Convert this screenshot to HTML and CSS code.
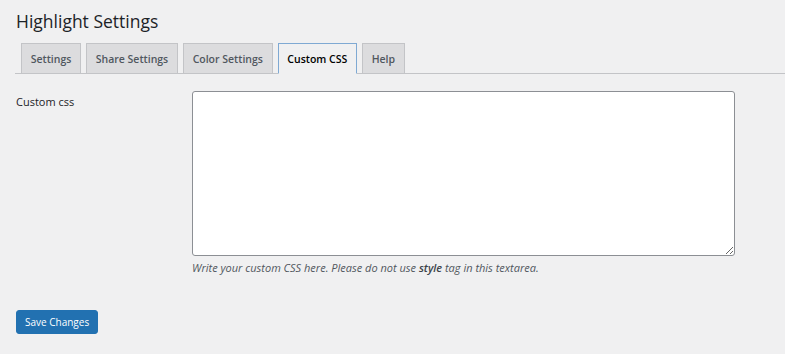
FILE: index.html
```html
<!DOCTYPE html>
<html lang="en">
<head>
    <meta charset="UTF-8">
    <meta name="viewport" content="width=device-width, initial-scale=1.0">
    <title>Highlight Settings</title>
    <link rel="stylesheet" href="styles.css">
</head>
<body>
    <div class="wrap">
        <h1>Highlight Settings</h1>

        <nav class="nav-tab-wrapper">
            <a href="#" class="nav-tab">Settings</a>
            <a href="#" class="nav-tab">Share Settings</a>
            <a href="#" class="nav-tab">Color Settings</a>
            <a href="#" class="nav-tab nav-tab-active">Custom CSS</a>
            <a href="#" class="nav-tab">Help</a>
        </nav>

        <form class="settings-form">
            <div class="form-row">
                <label for="custom_css" class="row-label">Custom css</label>
                <div class="row-field">
                    <textarea id="custom_css" name="custom_css"></textarea>
                    <p class="description">Write your custom CSS here. Please do not use <strong>style</strong> tag in this textarea.</p>
                </div>
            </div>

            <p class="submit">
                <button type="submit" class="button-primary">Save Changes</button>
            </p>
        </form>
    </div>
</body>
</html>
```

FILE: styles.css
```css
body {
    margin: 0;
    background: #f0f0f1;
    color: #1d2327;
    font-family: "Open Sans", "Noto Sans", sans-serif;
}
.wrap {
    padding: 9px 0 0 15px;
}
h1 {
    margin: 0 0 0 1px;
    font-size: 17.5px;
    font-weight: 400;
    line-height: 24px;
    color: #1d2327;
}
.nav-tab-wrapper {
    display: flex;
    margin-top: 10px;
    padding-left: 6px;
    border-bottom: 1px solid #c3c4c7;
}
.nav-tab {
    display: block;
    margin-right: 5px;
    margin-bottom: -1px;
    padding: 5px 8.7px 4px;
    font-size: 10.5px;
    font-weight: 600;
    line-height: 20px;
    color: #50575e;
    text-decoration: none;
    background: #dcdcde;
    border: 1px solid #c3c4c7;
}
.nav-tab-active {
    color: #000;
    background: #f0f0f1;
    border-color: #7fa9d3;
    border-bottom-color: #f0f0f1;
}
.settings-form {
    margin: 0;
}
.form-row {
    display: flex;
    padding-top: 17px;
}
.row-label {
    width: 176px;
    padding-left: 1px;
    padding-top: 3px;
    font-size: 11px;
    font-weight: 400;
    color: #1d2327;
}
.row-field {
    display: flex;
    flex-direction: column;
}
textarea {
    width: 543px;
    height: 165px;
    box-sizing: border-box;
    margin: 0;
    border: 1px solid #8c8f94;
    border-radius: 3px;
    background: #fff;
    font-family: inherit;
}
.description {
    margin: 4px 0 0;
    font-size: 11px;
    font-style: italic;
    color: #50575e;
}
.description strong {
    font-weight: 600;
    color: #3c434a;
}
.submit {
    margin: 34px 0 0 1px;
}
.button-primary {
    height: 24px;
    padding: 0 8px;
    font-family: inherit;
    font-size: 10px;
    font-weight: 500;
    color: #fff;
    background: #2271b1;
    border: 1px solid #2271b1;
    border-radius: 3px;
    cursor: pointer;
}
```
